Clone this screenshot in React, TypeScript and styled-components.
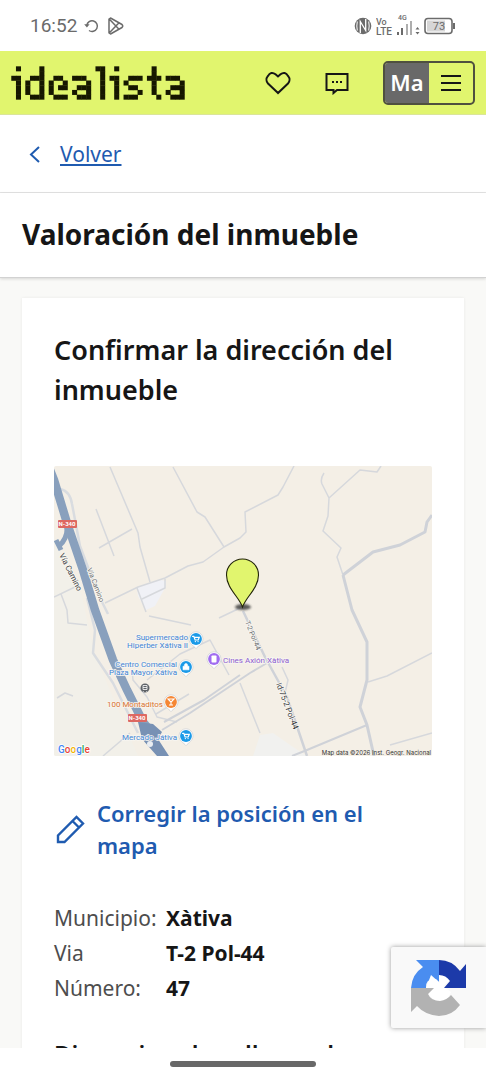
import React from "react";
import styled, { createGlobalStyle } from "styled-components";

const GlobalStyle = createGlobalStyle`
  *, *::before, *::after { box-sizing: border-box; }
  body { margin: 0; background: #fff; color: #161616; font-family: "Noto Sans", "Open Sans", sans-serif; }
  h1, h2, h3, dl, dd { margin: 0; }
`;

const Screen = styled.div`
  display: flex;
  flex-direction: column;
  height: 100vh;
  position: relative;
  overflow: hidden;
`;

const StatusBar = styled.div`
  flex: none;
  display: flex;
  align-items: center;
  justify-content: space-between;
  height: 51px;
  padding: 0 30px;
  color: #6b6b6b;
`;

const StatusGroup = styled.div<{ $gap: number }>`
  display: flex;
  align-items: center;
  gap: ${(p) => p.$gap}px;
`;

const Clock = styled.span`
  font: 400 19px/24px Roboto, sans-serif;
`;

const TopBar = styled.header`
  flex: none;
  display: flex;
  align-items: center;
  height: 64px;
  padding: 0 11px;
  background: #e1f56e;
  border-bottom: 1px solid #dbe59a;
`;

const LogoLink = styled.a`
  display: flex;
  margin-right: auto;
`;

const IconButton = styled.button`
  display: grid;
  place-items: center;
  width: 28px;
  height: 40px;
  margin-right: 32px;
  padding: 0;
  border: 0;
  background: none;
  color: #161616;
`;

const AccountButton = styled.button`
  display: flex;
  width: 92px;
  height: 44px;
  padding: 0;
  overflow: hidden;
  border: 2px solid #4f503f;
  border-radius: 5px;
  background: none;
  color: #161616;
`;

const Initials = styled.span`
  width: 44px;
  height: 100%;
  background: #696969;
  color: #fff;
  font: 600 22px/38px "Noto Sans", sans-serif;
  text-align: center;
`;

const MenuGlyph = styled.span`
  flex: 1;
  height: 100%;
  display: grid;
  place-items: center;
`;

const BackBar = styled.nav`
  flex: none;
  display: flex;
  align-items: center;
  height: 78px;
  padding: 0 28px;
  border-bottom: 1px solid #e4e4e4;
`;

const BackLink = styled.a`
  display: flex;
  align-items: center;
  gap: 18px;
  color: #1f5bb0;
  font-size: 21px;
  line-height: 28px;
  text-decoration: none;
  span { text-decoration: underline; text-decoration-thickness: 2px; text-underline-offset: 2px; }
`;

const TitleBar = styled.div`
  flex: none;
  height: 85px;
  padding: 21px 22px;
  border-bottom: 1px solid #d2d2d2;
  box-shadow: 0 1px 3px rgba(0, 0, 0, 0.14);
  z-index: 1;
`;

const PageTitle = styled.h1`
  font-size: 28px;
  line-height: 40px;
  font-weight: 700;
`;

const Scroller = styled.main`
  flex: 1;
  min-height: 0;
  overflow: hidden;
  padding: 20px 22px 0;
  background: #f9f9f7;
`;

const Card = styled.section`
  min-height: 100%;
  padding: 32px;
  background: #fff;
  box-shadow: 0 0 3px rgba(0, 0, 0, 0.07);
`;

const CardTitle = styled.h2`
  font-size: 27px;
  line-height: 40px;
  font-weight: 600;
`;

const SectionTitle = styled.h3`
  font-size: 24px;
  line-height: 40px;
  font-weight: 600;
`;

const MapFrame = styled.div`
  margin: 56px 0 41px;
  svg { display: block; width: 100%; height: auto; }
`;

const EditLink = styled.a`
  display: flex;
  align-items: center;
  gap: 12px;
  padding-right: 32px;
  color: #1f5bb0;
  font-size: 22px;
  line-height: 32px;
  font-weight: 600;
  text-decoration: none;
  svg { flex: none; }
`;

const Address = styled.dl`
  display: grid;
  grid-template-columns: 100px 1fr;
  column-gap: 12px;
  margin: 40px 0 28px;
  font-size: 21px;
  line-height: 35px;
  dt { color: #4d4d4d; }
  dd { font-weight: 700; white-space: nowrap; }
`;

const Captcha = styled.aside`
  position: absolute;
  right: 0;
  bottom: 52px;
  z-index: 2;
  display: flex;
  align-items: center;
  width: 95px;
  height: 81px;
  padding-left: 20px;
  background: #f9f9f9;
  border-radius: 2px 0 0 2px;
  box-shadow: 0 0 5px #999;
`;

const GestureBar = styled.footer`
  flex: none;
  display: flex;
  justify-content: center;
  align-items: center;
  height: 32px;
  background: #fff;
`;

const Pill = styled.span`
  width: 146px;
  height: 6px;
  border-radius: 3px;
  background: #686868;
`;

const LOGO_ROWS = [
  " #    #           ##  #       #      ",
  "      #            #          #      ",
  "##  ###  ##  ###   # ##  ### ### ### ",
  " # #  # #  #    #  #  # #     #     #",
  " # #  # # ##  ###  #  #  ##   #   ###",
  " # #  # #    #  #  #  #    #  #  #  #",
  " #  ###  ###  ###  #  # ###    #  ###",
];

const Logo = () => (
  <svg width="174" height="34" viewBox="-0.1 -0.1 37.2 7.2" preserveAspectRatio="none" role="img" aria-label="idealista" fill="#161700">
    {LOGO_ROWS.flatMap((row, y) =>
      [...row].map((c, x) => (c === "#" ? <rect key={`${x}-${y}`} x={x - 0.04} y={y - 0.03} width="1.08" height="1.06" /> : null))
    )}
  </svg>
);

const Cart = () => (
  <path d="M-3.4-2.6h1.2L-.9 1h3.1L3.3-1.7H-1.7M-.7 2.6h.1M2 2.6h.1" fill="none" stroke="#fff" strokeWidth="1.2" strokeLinecap="round" />
);

const Poi = ({ x, y, color, children }: { x: number; y: number; color: string; children: React.ReactNode }) => (
  <g transform={`translate(${x} ${y})`}>
    <path d="M0 9.5C-2 7-7 5-7-.2A7 7 0 0 1 7-.2C7 5 2 7 0 9.5Z" fill="#fff" stroke="#c3c8cc" strokeWidth=".6" />
    <circle r="5.9" fill={color} />
    {children}
  </g>
);

const StreetMap = () => (
  <svg viewBox="0 0 378 290" role="img" aria-label="Mapa de Xàtiva" fontFamily="Roboto, sans-serif">
    <defs>
      <clipPath id="frame"><rect width="378" height="290" rx="2" /></clipPath>
      <filter id="soft" x="-50%" y="-50%" width="200%" height="200%"><feGaussianBlur stdDeviation="1.2" /></filter>
    </defs>
    <g clipPath="url(#frame)">
      <rect width="378" height="290" fill="#f4efe6" />
      <path d="M0 70L28 130 40 187 84 290H0Z" fill="#f2f0e9" />
      <path d="M83 121L96 117 107 114 112 115 111 122 101 140 92 144 84 130Z" fill="#f0f1f6" />
      <path d="M199 290L206 269 219 267 239 281 253 290Z" fill="#f1f1ef" />
      <g fill="none" stroke="#d6d8dc" strokeWidth="1.5" strokeLinejoin="round">
        <path d="M56 1L84 67 86 81 96 116" />
        <path d="M119 1L143 46 151 51 170 81" />
        <path d="M51 137L84 121 111 112 134 100 149 96 170 81 186 72 192 66 191 46 224 29 229 21 240 0" />
        <path d="M42 43L60 90M45 82L78 63M83 122L92 146M88 133L111 122 111 113" />
        <path d="M270 7Q266 13 268 18L275 32 306 4 323 6 327 0M275 32L274 50 269 65 287 82 283 91 289 109" />
        <path d="M0 131L23 120M7 128L13 144 14 157 33 159M3 232L11 227 19 230" />
        <path d="M314 216L333 210 378 187M336 279L378 267M186 217L206 267M228 201L234 214 231 227" />
        <path d="M49 290L76 267M95 150L137 159M186 142L165 152" />
        <path d="M78 204L79 214 93 231 103 251 123 256M93 214L126 188 156 174 175 209M102 248L135 228" />
      </g>
      <g fill="none" stroke="#d9dce0" strokeWidth="2.5" strokeLinejoin="round">
        <path d="M6 23Q16 25 18 38L26 80 44 128 54 148M33 132L41 164 39 187 59 217 84 267" />
      </g>
      <g fill="none" stroke="#cfd2d8" strokeWidth="2.5" strokeLinejoin="round">
        <path d="M189 145L211 191 233 231 253 290" />
        <path d="M289 109L298 144 313 176 313 214 306 241 313 259 320 290" strokeWidth="3" />
        <path d="M289 109L319 86 346 79 371 66 373 56 378 49" strokeWidth="3" />
        <path d="M108 264L136 247 196 207 213 197M110 256L150 234 186 209M238 290L253 284 313 259" strokeWidth="2" />
      </g>
      <path d="M-4 4L0 14 13 57 29 104 41 144 59 194 73 224 89 256 100 270" fill="none" stroke="#89a0bd" strokeWidth="8.5" />
      <path d="M13 60Q14 72 5 80M2 74L7 84" fill="none" stroke="#89a0bd" strokeWidth="5" />
      <path d="M84 256L99 258 108 266 104 273 115 290H103L88 273Z" fill="#7891b4" />
      <circle cx="96" cy="278" r="3" fill="#e9edf2" />
      <g fontSize="6" fontWeight="700" fill="#fff" textAnchor="middle">
        <rect x="4" y="54" width="19" height="8" rx="1" fill="#dd6862" />
        <text x="13" y="60">N-340</text>
        <rect x="74" y="248" width="19" height="8" rx="1" fill="#dd6862" />
        <text x="83" y="254">N-340</text>
      </g>
      <g stroke="#f8f6f1" strokeWidth="1.6" paintOrder="stroke" fontSize="8">
        <text transform="translate(5 89) rotate(63)" fill="#3c4043">Vía Camino</text>
        <text transform="translate(33 103) rotate(69)" fontSize="7" fill="#6b6e72">Vía Camino</text>
        <text transform="translate(191 156) rotate(68)" fontSize="7" fill="#6b6e72">T-2 Pol-44</text>
        <text transform="translate(222 218) rotate(69)" fill="#3c4043">Id-75-2 Pol-44</text>
        <g fill="#4285d6" textAnchor="end">
          <text x="134" y="174">Supermercado</text>
          <text x="134" y="182">Hiperber Xátiva II</text>
          <text x="123" y="201">Centro Comercial</text>
          <text x="123" y="209">Plaza Mayor Xátiva</text>
          <text x="123" y="274">Mercado Játiva</text>
        </g>
        <text x="109" y="241" textAnchor="end" fill="#d8722f">100 Montaditos</text>
        <text x="169" y="197" fill="#8d5cd0">Cines Axión Xàtiva</text>
      </g>
      <Poi x={142} y={173} color="#1a9ae8"><Cart /></Poi>
      <Poi x={132} y={201} color="#1a9ae8">
        <path d="M-3-.8H3V2.8H-3ZM-1.5-.8V-2a1.5 1.5 0 0 1 3 0v1.2" fill="#fff" stroke="#fff" strokeWidth=".6" />
      </Poi>
      <Poi x={132} y={270} color="#1a9ae8"><Cart /></Poi>
      <Poi x={117} y={236} color="#f58634">
        <path d="M-3-3H3L0 .2ZM0 0V3M-2 3H2" fill="none" stroke="#fff" strokeWidth="1.1" />
      </Poi>
      <Poi x={160} y={193} color="#a06cf0"><rect x="-2.5" y="-3.5" width="5" height="7" rx=".8" fill="#fff" /></Poi>
      <circle cx="91" cy="222" r="4.5" fill="#5f6368" />
      <path d="M89 219.5h4v4h-4ZM89 221.5h4M89.5 225l-.6 1M92.5 225l.6 1" fill="none" stroke="#fff" strokeWidth=".8" />
      <ellipse cx="189" cy="141" rx="8" ry="3" fill="#333" opacity=".8" filter="url(#soft)" />
      <path d="M188.5 141C185 131 172.5 122 172.5 109A16 16 0 0 1 204.5 109C204.5 122 192 131 188.5 141Z" fill="#e1f56e" stroke="#22240a" strokeWidth="1.1" />
      <g fontSize="10" fontWeight="500" stroke="#fff" strokeWidth="1.5" paintOrder="stroke">
        <text x="4" y="287">
          <tspan fill="#4285f4">G</tspan><tspan fill="#ea4335">o</tspan><tspan fill="#f2b400">o</tspan>
          <tspan fill="#4285f4">g</tspan><tspan fill="#34a853">l</tspan><tspan fill="#ea4335">e</tspan>
        </text>
      </g>
      <text x="377" y="289" textAnchor="end" fontSize="6" fontFamily="Inter, sans-serif" fill="#333">Map data ©2026 Inst. Geogr. Nacional</text>
    </g>
  </svg>
);

export default function App() {
  return (
    <Screen>
      <GlobalStyle />
      <StatusBar>
        <StatusGroup $gap={7}>
          <Clock>16:52</Clock>
          <svg width="15" height="14" viewBox="0 0 15 14" fill="none" stroke="currentColor" strokeWidth="1.5">
            <path d="M2.8 6.5A5.3 5.3 0 1 1 5 11.5" /><path d="M.2 5.2h5.4L2.9 8.6Z" fill="currentColor" stroke="none" />
          </svg>
          <svg width="20" height="18" viewBox="0 0 20 18" fill="none" stroke="currentColor" strokeWidth="1.5" strokeLinejoin="round">
            <path d="M3 2 4.500 1 16 7.500Q17.500 9 16 10.500L4.500 17 3 16ZM3.200 2 13 12.200M3.200 16 13 5.800" />
          </svg>
        </StatusGroup>
        <StatusGroup $gap={4}>
          <svg width="18" height="18" viewBox="0 0 18 18" fill="none">
            <circle cx="9" cy="9" r="8.3" fill="currentColor" />
            <path d="M6.3 16V4.5L11.7 13.500V2" stroke="#fff" strokeWidth="1.3" />
            <path d="M3.3 4.5Q2.3 9 3.3 13.500M14.700 4.500Q15.700 9 14.700 13.500" stroke="#fff" strokeWidth="1" />
          </svg>
          <svg width="80" height="24" viewBox="0 0 80 24" fill="currentColor" fontFamily="Roboto, sans-serif">
            <text x="0" y="11" fontSize="9" fontWeight="500">Vo</text>
            <text x="0" y="21" fontSize="10" fontWeight="500">LTE</text>
            <text x="22" y="6" fontSize="7" fontWeight="500">4G</text>
            <path d="M21 18h2v3h-2ZM25 14h2v7h-2Z" />
            <path d="M30 10h2v11h-2ZM34 7h2v14h-2Z" opacity=".55" />
            <path d="M39.5 15.5l2-2.5 2 2.5ZM39.5 18h4l-2 2.5Z" />
            <rect x="49" y="4.5" width="27" height="15" rx="3" fill="none" stroke="currentColor" strokeWidth="1.6" />
            <rect x="51" y="6.5" width="18" height="11" fill="#d6d6d6" />
            <rect x="77" y="9" width="2" height="6" />
            <text x="63" y="16" fontSize="11" textAnchor="middle">73</text>
          </svg>
        </StatusGroup>
      </StatusBar>

      <TopBar>
        <LogoLink href="#"><Logo /></LogoLink>
        <IconButton type="button" aria-label="Favoritos">
          <svg width="28" height="24" viewBox="0 0 28 24" fill="none" stroke="currentColor" strokeWidth="2">
            <path d="M15 22 5 12.5A5.5 5.5 0 0 1 4.8 5.2Q8-.2 12.5 3.3L15 5.5 17.5 3.3Q22-.2 25.2 5.2A5.5 5.5 0 0 1 25 12.5Z" />
          </svg>
        </IconButton>
        <IconButton type="button" aria-label="Mensajes">
          <svg width="24" height="24" viewBox="0 0 24 24" fill="none" stroke="currentColor" strokeWidth="2">
            <path d="M1.5 3H22.5V19H12L8.5 22V19H1.5Z" />
            <path d="M7 11h2M11 11h2M15 11h2" />
          </svg>
        </IconButton>
        <AccountButton type="button" aria-label="Menú de cuenta">
          <Initials>Ma</Initials>
          <MenuGlyph>
            <svg width="20" height="18" viewBox="0 0 20 18" stroke="currentColor" strokeWidth="2"><path d="M0 2h20M0 9h20M0 16h20" /></svg>
          </MenuGlyph>
        </AccountButton>
      </TopBar>

      <BackBar>
        <BackLink href="#">
          <svg width="14" height="18" viewBox="0 0 14 18" fill="none" stroke="currentColor" strokeWidth="2"><path d="M11 2 3 9.5 11 17" /></svg>
          <span>Volver</span>
        </BackLink>
      </BackBar>
      <TitleBar><PageTitle>Valoración del inmueble</PageTitle></TitleBar>

      <Scroller>
        <Card>
          <CardTitle>Confirmar la dirección del inmueble</CardTitle>
          <MapFrame><StreetMap /></MapFrame>
          <EditLink href="#">
            <svg width="31" height="32" viewBox="0 0 31 32" fill="none" stroke="currentColor" strokeWidth="2.4">
              <path d="M4 29V22.5L22.5 4 29 10.5 10.5 29ZM18.5 8 25 14.5" />
            </svg>
            <span>Corregir la posición en el mapa</span>
          </EditLink>
          <Address>
            <dt>Municipio:</dt><dd>Xàtiva</dd>
            <dt>Via</dt><dd>T-2 Pol-44</dd>
            <dt>Número:</dt><dd>47</dd>
          </Address>
          <SectionTitle>Dinos si es de calle con luz</SectionTitle>
        </Card>
      </Scroller>

      <Captcha aria-label="reCAPTCHA">
        <svg width="56" height="56" viewBox="0 0 56 56">
          <path d="M28 0V22L21 15 26 19Q14 18 15 28H0Q1 14 12 7L5 0Z" fill="#4a8df0" />
          <path d="M20 15L29 23 28 14Q36 13 39 20L32 26 40 32 36 40Q26 44 19 36L17 33 23 28H15Z" fill="#fff" />
          <path d="M28 0Q41 0 49 11L55 4V28H33L39 21Q35 15 28 15Z" fill="#1c3aa9" />
          <path d="M0 28H23L17 34Q20 41 29 41 36 40 40 35L49 45Q41 56 28 56 14 55 6 46L0 52Z" fill="#b2b2b2" />
        </svg>
      </Captcha>
      <GestureBar><Pill /></GestureBar>
    </Screen>
  );
}
